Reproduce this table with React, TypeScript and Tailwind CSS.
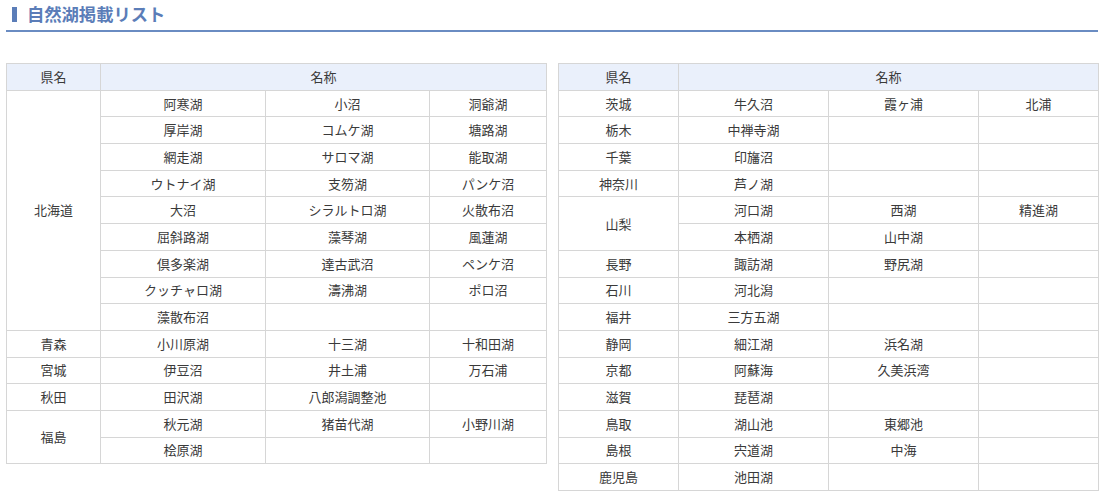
import React from "react";

type Row = { pref?: string; span?: number; names: string[] };

const left: Row[] = [
  { pref: "北海道", span: 9, names: ["阿寒湖", "小沼", "洞爺湖"] },
  { names: ["厚岸湖", "コムケ湖", "塘路湖"] },
  { names: ["網走湖", "サロマ湖", "能取湖"] },
  { names: ["ウトナイ湖", "支笏湖", "パンケ沼"] },
  { names: ["大沼", "シラルトロ湖", "火散布沼"] },
  { names: ["屈斜路湖", "藻琴湖", "風蓮湖"] },
  { names: ["倶多楽湖", "達古武沼", "ペンケ沼"] },
  { names: ["クッチャロ湖", "濤沸湖", "ポロ沼"] },
  { names: ["藻散布沼", "", ""] },
  { pref: "青森", names: ["小川原湖", "十三湖", "十和田湖"] },
  { pref: "宮城", names: ["伊豆沼", "井土浦", "万石浦"] },
  { pref: "秋田", names: ["田沢湖", "八郎潟調整池", ""] },
  { pref: "福島", span: 2, names: ["秋元湖", "猪苗代湖", "小野川湖"] },
  { names: ["桧原湖", "", ""] },
];

const right: Row[] = [
  { pref: "茨城", names: ["牛久沼", "霞ヶ浦", "北浦"] },
  { pref: "栃木", names: ["中禅寺湖", "", ""] },
  { pref: "千葉", names: ["印旛沼", "", ""] },
  { pref: "神奈川", names: ["芦ノ湖", "", ""] },
  { pref: "山梨", span: 2, names: ["河口湖", "西湖", "精進湖"] },
  { names: ["本栖湖", "山中湖", ""] },
  { pref: "長野", names: ["諏訪湖", "野尻湖", ""] },
  { pref: "石川", names: ["河北潟", "", ""] },
  { pref: "福井", names: ["三方五湖", "", ""] },
  { pref: "静岡", names: ["細江湖", "浜名湖", ""] },
  { pref: "京都", names: ["阿蘇海", "久美浜湾", ""] },
  { pref: "滋賀", names: ["琵琶湖", "", ""] },
  { pref: "鳥取", names: ["湖山池", "東郷池", ""] },
  { pref: "島根", names: ["宍道湖", "中海", ""] },
  { pref: "鹿児島", names: ["池田湖", "", ""] },
];

function LakeTable({ rows, widths }: { rows: Row[]; widths: number[] }) {
  const cell = "border border-[#d6d6d6] text-center p-0 h-[26.7px] leading-[18px]";
  return (
    <table className="w-[540px] border-collapse table-fixed border border-[#d6d6d6] text-[13px] text-[#3a3a3a]">
      <colgroup>
        {widths.map((w, i) => (
          <col key={i} style={{ width: w }} />
        ))}
      </colgroup>
      <thead>
        <tr className="bg-[#eaf0fb]">
          <th className={cell + " font-normal"}>県名</th>
          <th className={cell + " font-normal"} colSpan={3}>
            名称
          </th>
        </tr>
      </thead>
      <tbody>
        {rows.map((r, i) => (
          <tr key={i}>
            {r.pref !== undefined && (
              <td className={cell} rowSpan={r.span ?? 1}>
                {r.pref}
              </td>
            )}
            {r.names.map((n, j) => (
              <td key={j} className={cell}>
                {n}
              </td>
            ))}
          </tr>
        ))}
      </tbody>
    </table>
  );
}

export default function App() {
  return (
    <div
      className="w-[1105px] h-[497px] bg-white"
      style={{ fontFamily: '"Noto Sans CJK JP", "Noto Sans", sans-serif' }}
    >
      <div className="ml-[6px] w-[1092px] border-b-2 border-[#6a8cc2] h-[32px] flex items-start pt-[3px]">
        <div className="flex items-center h-[22px]">
          <span className="ml-[6px] w-[5px] h-[15px] bg-[#5b7db8]" />
          <span className="ml-[10px] text-[17.3px] font-bold text-[#5b7db8] leading-[22px]">
            自然湖掲載リスト
          </span>
        </div>
      </div>
      <div className="flex items-start gap-[11px] ml-[6px] mt-[31px]">
        <LakeTable rows={left} widths={[94, 165, 164, 117]} />
        <LakeTable rows={right} widths={[120, 150, 150, 120]} />
      </div>
    </div>
  );
}
